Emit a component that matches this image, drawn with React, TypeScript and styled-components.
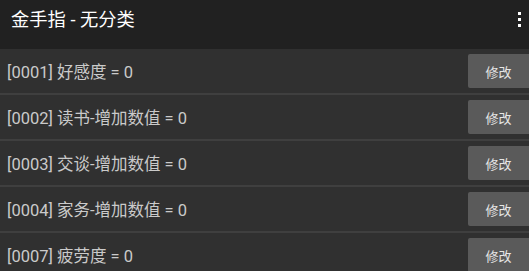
import styled, { createGlobalStyle } from "styled-components";

const GlobalStyle = createGlobalStyle`
  body {
    margin: 0;
    background: #2f2f2f;
    font-family: Roboto, "Noto Sans CJK SC", sans-serif;
  }
`;

const cheats = [
  { id: "0001", name: "好感度", value: 0 },
  { id: "0002", name: "读书-增加数值", value: 0 },
  { id: "0003", name: "交谈-增加数值", value: 0 },
  { id: "0004", name: "家务-增加数值", value: 0 },
  { id: "0007", name: "疲劳度", value: 0 },
];

function App() {
  return (
    <Page>
      <GlobalStyle />
      <Header>
        <Title>金手指 - 无分类</Title>
        <MenuButton>
          <Dot />
          <Dot />
          <Dot />
        </MenuButton>
      </Header>
      <List>
        {cheats.map((c) => (
          <Row key={c.id}>
            <Label>
              [{c.id}] {c.name} = {c.value}
            </Label>
            <EditButton>修改</EditButton>
          </Row>
        ))}
      </List>
    </Page>
  );
}

const Page = styled.div`
  width: 529px;
  height: 271px;
  overflow: hidden;
  background: #2f2f2f;
`;

const Header = styled.div`
  height: 49px;
  background: #212121;
  display: flex;
  align-items: flex-start;
  justify-content: space-between;
  padding: 0 8px 0 11px;
  box-sizing: border-box;
`;

const Title = styled.div`
  color: #ffffff;
  font-size: 18.3px;
  line-height: 40px;
`;

const MenuButton = styled.div`
  display: flex;
  flex-direction: column;
  gap: 3px;
  padding-top: 12px;
`;

const Dot = styled.span`
  width: 3px;
  height: 3px;
  background: #ffffff;
`;

const List = styled.div`
  display: flex;
  flex-direction: column;
`;

const Row = styled.div`
  height: 44px;
  display: flex;
  align-items: center;
  justify-content: space-between;
  padding-left: 7px;
  background: #303030;
  border-bottom: 2px solid #3f3f3f;
`;

const Label = styled.span`
  color: #cacaca;
  font-size: 16.5px;
`;

const EditButton = styled.button`
  width: 61px;
  height: 34px;
  border: none;
  border-radius: 2px 0 0 2px;
  background: #5a5a5a;
  color: #e6e6e6;
  font-family: Roboto, "Noto Sans CJK SC", sans-serif;
  font-size: 13px;
  padding: 0;
`;

export default App;
